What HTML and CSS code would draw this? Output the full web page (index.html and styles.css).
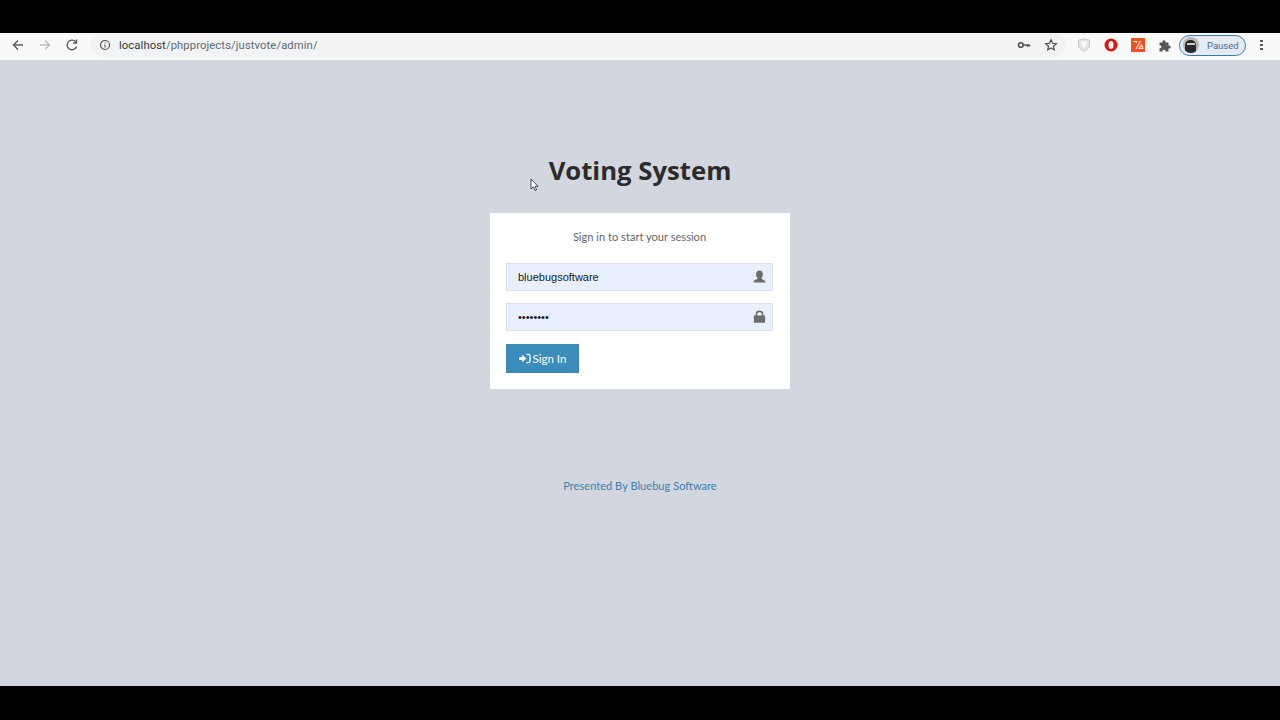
FILE: index.html
```html
<!DOCTYPE html>
<html lang="en">

<head>
    <meta charset="UTF-8">
    <meta name="viewport" content="width=device-width, initial-scale=1.0">
    <title>Voting System</title>
    <link rel="stylesheet" href="styles.css">
</head>

<body>
    <div class="black-bar top"></div>

    <div class="toolbar">
        <div class="nav-buttons">
            <svg class="nav-icon" viewBox="0 0 16 16"><path d="M13 8H4M8 3.5L3.5 8 8 12.5" /></svg>
            <svg class="nav-icon disabled" viewBox="0 0 16 16"><path d="M3 8h9M8 3.5L12.500 8 8 12.5" /></svg>
            <svg class="nav-icon" viewBox="0 0 16 16"><path d="M12.500 9.500A4.800 4.800 0 1 1 11.600 4.800M12.500 2.500v3.500H9" /></svg>
        </div>
        <div class="omnibox">
            <svg class="info-icon" viewBox="0 0 12 12"><circle cx="6" cy="6" r="4.500" /><path d="M6 5.500v3M6 3.400v1.100" /></svg>
            <span class="url"><span class="host">localhost</span>/phpprojects/justvote/admin/</span>
            <div class="omnibox-actions">
                <svg class="key-icon" viewBox="0 0 14 14"><circle cx="3.800" cy="7" r="2.300" /><path d="M6 7h6.500M10.500 7v2M12.500 7v1.500" /></svg>
                <svg class="star-icon" viewBox="0 0 14 14"><path d="M7 1.800l1.600 3.500 3.700.4-2.800 2.500.8 3.700L7 10l-3.300 1.900.8-3.700-2.800-2.500 3.700-.4z" /></svg>
            </div>
        </div>
        <div class="extensions">
            <svg class="ext-icon" viewBox="0 0 14 14"><path class="shield" d="M1.500 2L7 .8 12.500 2v5c0 3-2.500 5-5.500 6.200C4 12 1.500 10 1.500 7z" /><path class="shield-inner" d="M4 3.500h6L8 9.500H6z" /></svg>
            <svg class="ext-icon" viewBox="0 0 14 14"><circle class="opera" cx="7" cy="7" r="6.500" /><ellipse class="opera-hole" cx="7" cy="7" rx="2.500" ry="4" /></svg>
            <div class="ext-orange">
                <svg viewBox="0 0 14 14"><path d="M2 3.500h4l-1 1.500M9.500 3L5 11M8 10.500l2.500-3.500 1.500 3.500z" /></svg>
            </div>
            <svg class="ext-icon" viewBox="0 0 14 14"><path class="puzzle" d="M1.500 4.500h3c-.6-3 3.600-3 3 0h3v3c3-.6 3 3.600 0 3v3h-3c.6-2.500-3.600-2.500-3 0h-3v-3.200c2.500.6 2.500-3.600 0-3z" /></svg>
        </div>
        <div class="profile">
            <div class="avatar"><div class="avatar-mask"><div class="avatar-eyes"></div></div></div>
            <span>Paused</span>
        </div>
        <div class="menu-dots"><i></i><i></i><i></i></div>
    </div>

    <div class="page">
        <svg class="cursor" viewBox="0 0 9 14"><path d="M1 1v10l2.400-2.200L5 12.500l1.600-.7-1.600-3.500h3z" /></svg>
        <div class="login-logo">Voting System</div>
        <div class="login-box">
            <p class="login-msg">Sign in to start your session</p>
            <form>
                <div class="field">
                    <input type="text" value="bluebugsoftware">
                    <svg class="field-icon" viewBox="0 0 12 12"><path d="M0.500 11.500c0-2 1.300-2.400 3.600-3.200v-1c-.8-.6-1.200-1.700-1.200-3.300C2.900 1.700 4 .5 6 .5s3.100 1.200 3.100 3.500c0 1.600-.4 2.700-1.200 3.300v1c2.300.8 3.600 1.200 3.600 3.200z" /></svg>
                </div>
                <div class="field">
                    <input type="password" value="12345678">
                    <svg class="field-icon" viewBox="0 0 12 12"><path fill-rule="evenodd" d="M.8 5h1.700V3.500C2.500 1.500 4 .5 6 .5s3.500 1 3.500 3V5h1.700v6.800H.8zM4 5h4V3.500C8 2.500 7.200 2 6 2s-2 .5-2 1.500z" /></svg>
                </div>
                <button type="button" class="btn-signin">
                    <svg viewBox="0 0 13 12"><path d="M0 4.500h3.500V2L8 6l-4.500 4V7.500H0z" /><path class="btn-door" d="M8 1.500h2c1.200 0 2 .8 2 2v5c0 1.200-.8 2-2 2H8" /></svg>
                    Sign In
                </button>
            </form>
        </div>
        <div class="presented">Presented By Bluebug Software</div>
    </div>

    <div class="black-bar bottom"></div>
</body>

</html>
```

FILE: styles.css
```css
html, body {
    height: 100%;
}

body {
    margin: 0;
    height: 720px;
    overflow: hidden;
    display: flex;
    flex-direction: column;
    font-family: "Lato", "Open Sans", sans-serif;
    background: #000;
}

.black-bar.top {
    height: 33px;
}

.black-bar.bottom {
    height: 34px;
}

/* browser chrome */
.toolbar {
    height: 27px;
    background: #f8f9f9;
    display: flex;
    align-items: center;
    padding: 0 0 3px 10px;
    box-sizing: border-box;
    flex-shrink: 0;
}

.nav-buttons {
    display: flex;
    gap: 11px;
}

.nav-icon {
    width: 16px;
    height: 16px;
    fill: none;
    stroke: #5a5d60;
    stroke-width: 1.4;
}

.nav-icon.disabled {
    stroke: #bcbfc2;
}

.omnibox {
    width: 975px;
    height: 24px;
    margin-left: 11px;
    border-radius: 12px;
    background: #f1f3f4;
    display: flex;
    align-items: center;
    padding-left: 8px;
    box-sizing: border-box;
}

.info-icon {
    width: 12px;
    height: 12px;
    fill: none;
    stroke: #4c4f52;
    stroke-width: 1.1;
}

.url {
    margin-left: 8px;
    font-family: "Roboto", sans-serif;
    font-size: 11.250px;
    letter-spacing: 0.1px;
    color: #5f6a72;
}

.host {
    color: #33373a;
}

.omnibox-actions {
    margin-left: auto;
    margin-right: 8px;
    display: flex;
    align-items: center;
    gap: 13px;
}

.key-icon {
    width: 14px;
    height: 14px;
    fill: none;
    stroke: #505356;
    stroke-width: 1.600;
}

.star-icon {
    width: 14px;
    height: 14px;
    fill: none;
    stroke: #4e5154;
    stroke-width: 1.200;
}

.extensions {
    display: flex;
    align-items: center;
    gap: 13px;
    margin-left: 11px;
}

.ext-icon {
    width: 14px;
    height: 14px;
}

.shield {
    fill: #e4e6e6;
    stroke: #c5c8c8;
}

.shield-inner {
    fill: #fafafa;
}

.opera {
    fill: #e0120f;
}

.opera-hole {
    fill: #fff;
}

.puzzle {
    fill: #55585b;
}

.ext-orange {
    width: 14px;
    height: 14px;
    background: #f0511e;
    display: flex;
}

.ext-orange svg {
    fill: none;
    stroke: #ffe6d8;
    stroke-width: 1.200;
}

.profile {
    width: 67px;
    height: 21px;
    margin-left: 7px;
    border: 1px solid #3b78b5;
    border-radius: 11px;
    background: #e4ebf4;
    box-sizing: border-box;
    display: flex;
    align-items: center;
    padding-left: 3px;
    font-family: "Roboto", sans-serif;
    font-size: 9.500px;
    color: #4a6a8f;
}

.profile span {
    margin-left: 8px;
}

.avatar {
    width: 16px;
    height: 16px;
    border-radius: 50%;
    background: #b8b8b4;
    position: relative;
    overflow: hidden;
}

.avatar-mask {
    position: absolute;
    left: 2px;
    top: 3px;
    width: 11px;
    height: 13px;
    border-radius: 5px 5px 2px 2px;
    background: #2a2a2c;
}

.avatar-eyes {
    margin: 3px 0 0 2px;
    width: 8px;
    height: 2px;
    background: #cfcac4;
}

.menu-dots {
    margin-left: 14px;
    display: flex;
    flex-direction: column;
    gap: 2px;
}

.menu-dots i {
    width: 3px;
    height: 2px;
    background: #55585b;
    display: block;
}

/* login page */
.page {
    flex: 1;
    background: #d2d6de;
    display: flex;
    flex-direction: column;
    align-items: center;
    padding-top: 91px;
    position: relative;
}

.cursor {
    position: absolute;
    left: 530px;
    top: 118px;
    width: 9px;
    height: 14px;
    fill: #fff;
    stroke: #222;
    stroke-width: 0.800;
}

.login-logo {
    height: 40px;
    line-height: 40px;
    font-family: "Open Sans", sans-serif;
    font-size: 25.700px;
    font-weight: 700;
    color: #2b2b2b;
}

.login-box {
    width: 300px;
    height: 176px;
    margin-top: 22px;
    background: #fff;
    padding: 15px 17px 0 16px;
    box-sizing: border-box;
}

.login-msg {
    margin: 0 0 17px;
    height: 18px;
    line-height: 18px;
    text-align: center;
    font-size: 11.100px;
    color: #666;
}

.field {
    position: relative;
    margin-bottom: 12px;
}

.field input {
    display: block;
    width: 100%;
    height: 28px;
    padding: 0 40px 0 11px;
    box-sizing: border-box;
    border: 1px solid #d9e0ea;
    border-radius: 0;
    outline: none;
    background: #e8f0fe;
    font-family: "Liberation Sans", sans-serif;
    font-size: 11px;
    color: #1a1a1a;
}

.field-icon {
    position: absolute;
    right: 7px;
    top: 7px;
    width: 13px;
    height: 13px;
    fill: #6d6d70;
}

.btn-signin {
    width: 73px;
    height: 29px;
    margin-top: 13px;
    padding: 0;
    border: 1px solid #3f87b5;
    border-radius: 0;
    background: #3c8dbc;
    color: #fff;
    font-family: "Lato", sans-serif;
    font-size: 11.500px;
    display: flex;
    align-items: center;
    justify-content: center;
    gap: 2px;
}

.btn-signin svg {
    width: 12px;
    height: 11px;
    fill: #fff;
}

.btn-door {
    fill: none;
    stroke: #fff;
    stroke-width: 1.400;
}

.presented {
    margin-top: 86px;
    height: 21px;
    line-height: 21px;
    font-size: 11.100px;
    color: #3c7fb1;
}
```
